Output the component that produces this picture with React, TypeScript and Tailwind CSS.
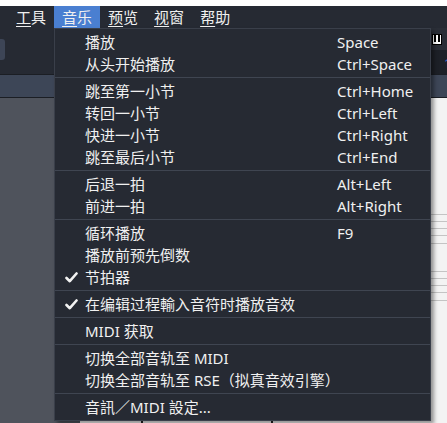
import { Fragment } from 'react';

type Item = { label: string; shortcut?: string; checked?: boolean };

const groups: Item[][] = [
  [
    { label: '播放', shortcut: 'Space' },
    { label: '从头开始播放', shortcut: 'Ctrl+Space' },
  ],
  [
    { label: '跳至第一小节', shortcut: 'Ctrl+Home' },
    { label: '转回一小节', shortcut: 'Ctrl+Left' },
    { label: '快进一小节', shortcut: 'Ctrl+Right' },
    { label: '跳至最后小节', shortcut: 'Ctrl+End' },
  ],
  [
    { label: '后退一拍', shortcut: 'Alt+Left' },
    { label: '前进一拍', shortcut: 'Alt+Right' },
  ],
  [
    { label: '循环播放', shortcut: 'F9' },
    { label: '播放前预先倒数' },
    { label: '节拍器', checked: true },
  ],
  [{ label: '在编辑过程輸入音符时播放音效', checked: true }],
  [{ label: 'MIDI 获取' }],
  [
    { label: '切换全部音轨至 MIDI' },
    { label: '切换全部音轨至 RSE（拟真音效引擎）' },
  ],
  [{ label: '音訊／MIDI 設定...' }],
];

const menus = ['工具', '音乐', '预览', '视窗', '帮助'];

function Check() {
  return (
    <svg width="13" height="11" viewBox="0 0 13 11" className="absolute left-[10px] top-[6px]">
      <path d="M1.5 6 L4.8 9.2 L11.5 1.5" fill="none" stroke="#f2f2f2" strokeWidth="2.6" strokeLinecap="round" strokeLinejoin="round" />
    </svg>
  );
}

export default function App() {
  return (
    <div className="relative flex h-[423px] w-[447px] flex-col overflow-hidden bg-[#f3f3f3] font-['Noto_Sans','Noto_Sans_CJK_SC',sans-serif] text-[15px] leading-none text-[#f0f0f0]">
      <div className="h-[6px] bg-white" />

      {/* menu bar */}
      <div className="flex h-[22px] bg-[#262a33] pl-2">
        {menus.map((m) => (
          <div
            key={m}
            className={`flex h-full items-center px-2 ${m === '音乐' ? 'bg-[#4a7fd1]' : ''}`}
          >
            <span className="underline decoration-1 underline-offset-[3px]">{m[0]}</span>
            <span>{m[1]}</span>
          </div>
        ))}
      </div>

      {/* toolbar */}
      <div className="flex h-[46px]">
        <div className="flex-1 bg-[#262a33] pt-[11px]">
          <div className="h-[21px] w-[5px] rounded-r-[3px] bg-[#3d4556]" />
        </div>
        <div className="flex w-[16px] flex-col">
          <div className="h-[22px] bg-[#2a2e37] pl-[1px] pt-[6px]">
            <div className="flex h-[11px] w-[10px] justify-around border border-black bg-white">
              <div className="h-[7px] w-[2px] bg-black" />
              <div className="h-[7px] w-[2px] bg-black" />
            </div>
          </div>
          <div className="flex-1 bg-[#1d2027] pl-[13px] pt-[7px] text-[13px] text-[#2f6fd8]">1</div>
        </div>
      </div>
      <div className="h-px bg-[#1b1e24]" />
      <div className="h-[22px] bg-[#3d4657]" />
      <div className="h-px bg-[#1b1e24]" />

      {/* content */}
      <div className="flex flex-1">
        <div className="w-[80px] bg-[#4f535c]" />
        <div className="flex-1 bg-[#f3f3f3]">
          <svg width="100%" height="325">
            {[116, 123, 130, 137, 145, 173, 180, 187, 194, 202].map((y) => (
              <line key={y} x1="0" x2="400" y1={y + 0.5} y2={y + 0.5} stroke="#c4c4c4" strokeWidth="1" />
            ))}
            <line x1="62" x2="62" y1="318" y2="325" stroke="#222" strokeWidth="2" />
            <line x1="192" x2="192" y1="318" y2="325" stroke="#222" strokeWidth="2" />
          </svg>
        </div>
      </div>

      {/* dropdown */}
      <div className="absolute left-[54px] top-[28px] w-[377px] border border-[#3a3f4a] bg-[#262a33] py-[2px] shadow-[3px_3px_4px_rgba(0,0,0,0.4)]">
        {groups.map((g, gi) => (
          <Fragment key={gi}>
            {gi > 0 && (
              <div className="py-[2px]">
                <div className="h-px bg-[#3f4551]" />
              </div>
            )}
            {g.map((it) => (
              <div key={it.label} className="relative flex h-[22px] items-center pl-[30px]">
                {it.checked && <Check />}
                <span className="whitespace-nowrap">{it.label}</span>
                {it.shortcut && (
                  <span className="absolute left-[282px] whitespace-nowrap">{it.shortcut}</span>
                )}
              </div>
            ))}
          </Fragment>
        ))}
      </div>
    </div>
  );
}
